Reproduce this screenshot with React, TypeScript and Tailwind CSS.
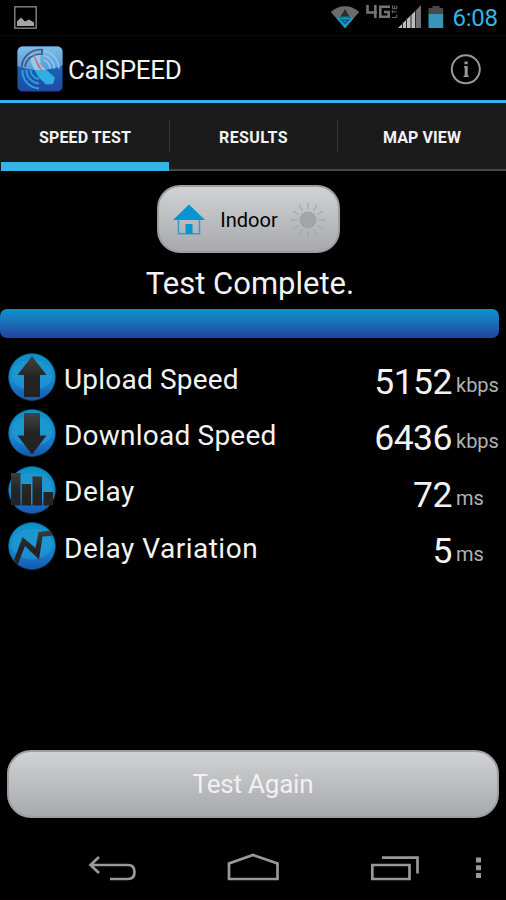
import React from "react";

function StatusIcons() {
  return (
    <svg width="120" height="36" viewBox="328 0 120 36" className="block">
      <path d="M330.800 12Q337 6.300 345 6.300Q353 6.300 359.200 12L345 28.300Z" fill="#6b6b6b" />
      <path d="M336.500 18.300Q345 12.500 353.500 18.300L345 28.300Z" fill="#149bd0" />
      <path d="M345 9L349.500 16.500H340.500Z" fill="#292c2e" />
      <path d="M339.500 18Q345 15 350.500 18M341.500 20h7l-3.500 3.500Z" fill="none" stroke="#17536c" strokeWidth="1.300" />
      <g fill="none" stroke="#737373" strokeWidth="2.600">
        <path d="M367.500 5V12.500H377M375.300 5V18M390 6.700H380.300V16.700H388.700V12H384" />
      </g>
      <g fill="none" stroke="#6a6a6a" strokeWidth="1">
        <path d="M392.500 5.500V8.800H396.800V5.500M394.600 5.500V8.800M392.300 10V13.500M392.300 11.800H397M392 17.500H396.700V14.500" />
      </g>
      <path d="M398 28L415.700 10.500V28Z" fill="#bcbcb8" />
      <path d="M415.700 10.500L421 5V28H415.700Z" fill="#707070" />
      <path d="M402.500 22v6M406.500 18v10M411 14v14M415.500 10v18" stroke="#292929" strokeWidth="1" />
      <path d="M428.500 8h4V6h7v2h3.700v6h-14.700Z" fill="#494949" />
      <path d="M428.500 14h14.700v14h-14.700Z" fill="#3994b9" />
    </svg>
  );
}

function AppIcon() {
  return (
    <svg width="46" height="46" viewBox="0 0 46 46" className="block">
      <defs>
        <linearGradient id="appTop" x1="0" y1="0" x2="0" y2="1">
          <stop offset="0" stopColor="#80bde8" />
          <stop offset="1" stopColor="#5b9ad4" />
        </linearGradient>
        <linearGradient id="appLow" x1="0" y1="0" x2="0" y2="1">
          <stop offset=".4" stopColor="#1668b8" />
          <stop offset="1" stopColor="#2148a4" />
        </linearGradient>
        <clipPath id="appClip"><rect x=".5" y=".5" width="45" height="45" rx="5" /></clipPath>
      </defs>
      <g clipPath="url(#appClip)">
        <rect width="46" height="46" fill="url(#appLow)" />
        <path d="M0 0H46V19Q36 24 23 24Q10 24 0 20Z" fill="url(#appTop)" />
        <g fill="none" stroke="#2f9fdb" strokeWidth="1.900">
          <path d="M5.500 24A17.500 17.500 0 0 0 22 42.500M9.500 24A13.500 13.500 0 0 0 22 37.500M13.500 24A9.500 9.500 0 0 0 22 33" />
        </g>
        <g fill="none" stroke="#8fc8ef" strokeWidth="1.600">
          <path d="M27 5A18.500 18.500 0 0 1 42 22.500M27 9.500A14 14 0 0 1 37.500 22.500M27 14A9.500 9.500 0 0 1 33 22.500" />
        </g>
        <path d="M13 8.500L23.500 8V18.700L38 31.500L36 38L29 38.500L21 30.500L14 17Z" fill="#30aee2" />
        <path d="M13 8.500L23.500 8V18.700L29 23.700Q23 24.500 17.500 23.700L14 17Z" fill="#8fccea" />
        <path d="M4.500 22C5 11 13 3.500 25 3.500V8C15.500 8 9 13 8 21" fill="none" stroke="#3f5785" strokeWidth="1.700" />
        <path d="M16.500 9L25 25L21.500 21Z" fill="#df5064" stroke="#df6577" strokeWidth="1" />
      </g>
    </svg>
  );
}

type Kind = "up" | "down" | "bars" | "line";

function MetricIcon({ kind }: { kind: Kind }) {
  return (
    <svg width="48" height="48" viewBox="0 0 48 48" className="block shrink-0">
      <defs>
        <linearGradient id={"ball-" + kind} x1="0" y1="0" x2="0" y2="1">
          <stop offset="0" stopColor="#0a93c8" />
          <stop offset=".55" stopColor="#138bd0" />
          <stop offset="1" stopColor="#1857b3" />
        </linearGradient>
        <radialGradient id={"gloss-" + kind} cx=".5" cy=".7" r=".6">
          <stop offset="0" stopColor="#15a0e2" />
          <stop offset=".7" stopColor="#2c9fd6" />
          <stop offset="1" stopColor="#2f9ad0" />
        </radialGradient>
        <linearGradient id={"ink-" + kind} x1="0" y1="0" x2="0" y2="48" gradientUnits="userSpaceOnUse">
          <stop offset="0" stopColor="#484848" />
          <stop offset=".5" stopColor="#252525" />
          <stop offset="1" stopColor="#231f20" />
        </linearGradient>
        <clipPath id={"clip-" + kind}><circle cx="24" cy="24" r="23.700" /></clipPath>
      </defs>
      <circle cx="24" cy="24" r="23.400" fill={"url(#ball-" + kind + ")"} stroke="#145b83" strokeWidth=".7" />
      <ellipse cx="24" cy="22" rx="20.500" ry="15.500" fill={"url(#gloss-" + kind + ")"} opacity=".5" />
      {kind === "up" && <path d="M24 3L38.500 22H32V44H16V22H9.500Z" fill="url(#ink-up)" />}
      {kind === "down" && <path d="M16 4H32V26.500H38.500L24 45.500L9.500 26.500H16Z" fill="url(#ink-down)" />}
      {kind === "bars" && <path d="M3 7H12.500V39.500H3ZM13.700 18H23V39.500H13.700ZM24.500 10.500H34V39.500H24.500ZM35.500 26H45V39.500H35.500Z" fill="url(#ink-bars)" />}
      {kind === "line" && (
        <path
          clipPath="url(#clip-line)"
          d="M6 38L14.500 15L27.500 26L30.500 10L44 8.500L47 13.500L34.500 14.500L31 37.500L17 24L9.500 43Z"
          fill="url(#ink-line)"
        />
      )}
    </svg>
  );
}

function House() {
  return (
    <svg width="32" height="32" viewBox="0 0 32 32" className="mt-[2px] block">
      <path d="M16 0.500L32 16H0Z" fill="#0795d1" />
      <path d="M5.500 15V29.800H26.500V15" fill="none" stroke="#2a9fd0" strokeWidth="1.500" />
      <path d="M12.500 20h7v10h-7Z" fill="#0795d1" />
    </svg>
  );
}

function Sun() {
  return (
    <svg width="36" height="36" viewBox="-18 -18 36 36" className="mt-px block">
      <circle r="8.500" fill="#a2a4a8" />
      <path
        d="M0-11V-17.500M0 11V17.500M-11 0H-17.500M11 0H17.500M5.500-9.500L8.700-15M-5.500-9.500L-8.700-15M5.500 9.500L8.700 15M-5.500 9.500L-8.700 15M9.500-5.500L15-8.700M-9.500-5.500L-15-8.700M9.500 5.500L15 8.700M-9.500 5.500L-15 8.700"
        stroke="#a6a8ac"
        strokeWidth="1.300"
      />
    </svg>
  );
}

const metrics: { kind: Kind; label: string; tracking: string; value: string; unit: string }[] = [
  { kind: "up", label: "Upload Speed", tracking: "tracking-[0.2px]", value: "5152", unit: "kbps" },
  { kind: "down", label: "Download Speed", tracking: "tracking-[0.22px]", value: "6436", unit: "kbps" },
  { kind: "bars", label: "Delay", tracking: "tracking-[0.5px]", value: "72", unit: "ms" },
  { kind: "line", label: "Delay Variation", tracking: "tracking-[0.5px]", value: "5", unit: "ms" },
];

export default function App() {
  return (
    <div className="flex h-[900px] w-[506px] flex-col overflow-hidden bg-black font-['Roboto',sans-serif] text-[#f3f3f3]">
      <div className="flex h-9 shrink-0 items-center border-b border-[#080808] pl-[14px]">
        <svg width="23" height="23" viewBox="0 0 23 23" className="block">
          <rect x=".8" y=".8" width="21.400" height="21.400" fill="none" stroke="#858585" strokeWidth="1.400" />
          <path d="M3 20V15.500L7 11.500L11 15.500L15 13.500L20 16.500V20Z" fill="#a5a5a5" />
        </svg>
        <div className="ml-auto"><StatusIcons /></div>
        <span className="w-[58px] pl-[4.500px] pt-px text-[24px] leading-9 tracking-[-0.3px] text-[#33b5e5]">6:08</span>
      </div>

      <header className="flex h-16 shrink-0 items-center pl-[17px] pr-6 pt-[2px]">
        <AppIcon />
        <h1 className="ml-[5px] pt-[2px] text-[26px] leading-8 tracking-[-0.3px]">CalSPEED</h1>
        <svg width="32" height="32" viewBox="0 0 32 32" className="ml-auto block">
          <circle cx="15.800" cy="16.300" r="14" fill="none" stroke="#999" strokeWidth="2" />
          <path d="M14.500 8.500h3.200v2.800h-3.200ZM14 13h3.700v9.500h1v1.500h-5v-1.500h1v-8h-.700Z" fill="#999" />
        </svg>
      </header>

      <nav className="flex h-[71px] shrink-0 border-t-[3px] border-[#33b5e5] bg-[#1b1b1b] text-[16px] font-bold">
        <div className="flex w-[169px] flex-col pl-px">
          <div className="flex h-[59px] items-center justify-center pt-[10px] tracking-[0.1px]">SPEED TEST</div>
          <div className="h-[9px] bg-[#33b5e5]" />
        </div>
        <div className="flex w-[168px] items-center border-b-2 border-[#484848]">
          <div className="h-[34px] w-px bg-[#363636]" />
          <div className="flex-1 pt-[3px] text-center tracking-[0.4px]">RESULTS</div>
        </div>
        <div className="flex w-[169px] items-center border-b-2 border-[#484848]">
          <div className="h-[34px] w-px bg-[#363636]" />
          <div className="flex-1 pt-[3px] text-center tracking-[0.1px]">MAP VIEW</div>
        </div>
      </nav>

      <main className="flex shrink-0 flex-col">
        <button className="ml-[157px] mt-[14px] flex h-[68px] w-[183px] items-center rounded-[23px] border-2 border-[#9d9ea1] bg-linear-to-b from-[#d1d2d4] to-[#a7a9ac] pl-[14px] text-black">
          <House />
          <span className="ml-[15px] w-[58px] whitespace-nowrap pt-[2px] text-[20px]">Indoor</span>
          <span className="ml-[12px]"><Sun /></span>
        </button>
        <p className="mt-[10px] h-[42px] whitespace-nowrap pr-[6px] text-center text-[31px] leading-[42px]">Test Complete.</p>
        <div className="mt-[4px] h-[29px] w-[499px] rounded-[7px] bg-linear-to-b from-[#0795cd] to-[#2143a1]" />
        <section className="mt-[11px]">
          {metrics.map((m) => (
            <div key={m.kind} className="flex h-[56.300px] items-center pl-2">
              <MetricIcon kind={m.kind} />
              <span className={"ml-[8px] whitespace-nowrap pt-[5px] text-[28px] leading-8 " + m.tracking}>{m.label}</span>
              <div className="ml-auto flex items-baseline pt-[10px]">
                <span className="text-[35.500px] leading-10 tracking-[-0.5px]">{m.value}</span>
                <span className="ml-[4px] w-[50px] -translate-y-[2px] whitespace-nowrap pb-[3px] text-[20px] leading-6 text-[#b2b2b2]">{m.unit}</span>
              </div>
            </div>
          ))}
        </section>
      </main>

      <button className="mx-[7px] mt-auto h-[68px] w-[492px] shrink-0 rounded-[24px] border-2 border-[#9d9ea1] bg-linear-to-b from-[#d1d2d4] to-[#a7a9ac] pt-px text-[26px] tracking-[-0.2px] text-[#f1f1f1]">
        Test Again
      </button>

      <footer className="h-[82px] shrink-0 border-b border-[#10000a]">
        <svg width="506" height="80" viewBox="0 818 506 80" className="block" fill="none" stroke="#999" strokeWidth="2.700">
          <path d="M99 857L90.500 865L99 873M91 865H128Q134.500 865 134.500 872Q134.500 879 128 879H110" />
          <path d="M229 879V863.500L253 855L277.500 863.500V879Z" />
          <path d="M372.300 865H409.500V879H372.300ZM382 857.700H417.500V873.500" />
          <path d="M476 857.500h5v5h-5ZM476 865.300h5v5h-5ZM476 873h5v5h-5Z" fill="#999" stroke="none" />
        </svg>
      </footer>
    </div>
  );
}
